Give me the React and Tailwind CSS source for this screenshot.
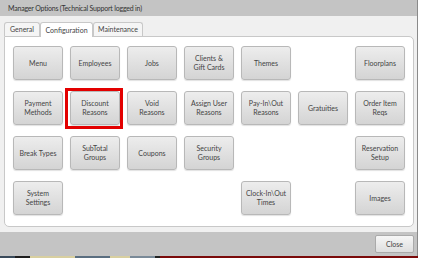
import React from 'react';

const rows = [
  ['Menu', 'Employees', 'Jobs', 'Clients &\nGift Cards', 'Themes', null, 'Floorplans'],
  ['Payment\nMethods', 'Discount\nReasons', 'Void\nReasons', 'Assign User\nReasons', 'Pay-In\\Out\nReasons', 'Gratuities', 'Order Item\nReqs'],
  ['Break Types', 'SubTotal\nGroups', 'Coupons', 'Security\nGroups', null, null, 'Reservation\nSetup'],
  ['System\nSettings', null, null, null, 'Clock-In\\Out\nTimes', null, 'Images'],
];

const OptionButton = ({ label, highlighted }) => (
  <div className="relative">
    <button className="w-[50px] h-[34px] rounded-[3px] border border-[#b8b8b8] bg-gradient-to-b from-[#ededed] to-[#d4d4d4] text-[7px] leading-[9px] text-[#444] whitespace-pre-line shadow-[0_1px_1px_rgba(0,0,0,0.12)]">
      {label}
    </button>
    {highlighted && (
      <div className="absolute -left-[5px] -top-[3px] w-[58px] h-[41px] border-[3px] border-[#e30000]"></div>
    )}
  </div>
);

const App = () => {
  return (
    <div className="w-[428px] h-[262px] bg-white relative" style={{ fontFamily: 'Lato, "Noto Sans", sans-serif' }}>
      <div className="w-[418px] h-[256px] flex flex-col border-r border-[#8a8a8a]">
        <div className="h-[16px] bg-[#c4c4c4] text-[7px] tracking-[-0.2px] leading-[16px] text-[#333] pl-[8px]">
          Manager Options (Technical Support logged in)
        </div>

        <div className="flex-1 bg-[#f0f0f0] flex flex-col px-[4px] pt-[6px]">
          <div className="flex items-end h-[14px] text-[7px] text-[#444]">
            <div className="h-[14px] w-[36px] flex items-center justify-center border border-b-0 border-[#c8c8c8] rounded-t-[3px] bg-[#f5f5f5]">General</div>
            <div className="h-[15px] w-[53px] flex items-center justify-center border border-b-0 border-[#c8c8c8] rounded-t-[3px] bg-white relative top-[1px] z-10">Configuration</div>
            <div className="h-[14px] w-[50px] flex items-center justify-center border border-b-0 border-[#c8c8c8] rounded-t-[3px] bg-[#f5f5f5]">Maintenance</div>
          </div>
          <div className="w-[410px] h-[191px] bg-white border border-[#c8c8c8] rounded-b-[5px] rounded-tr-[5px] pl-[8px] pt-[9px] flex flex-col gap-[11px]">
            {rows.map((row, r) => (
              <div key={r} className="flex gap-[7px]">
                {row.map((label, c) =>
                  label ? (
                    <OptionButton key={c} label={label} highlighted={r === 1 && c === 1} />
                  ) : (
                    <div key={c} className="w-[50px] h-[34px]"></div>
                  )
                )}
              </div>
            ))}
          </div>
          <div className="h-[5px]"></div>
        </div>

        <div className="h-[24px] bg-[#c4c4c4] flex items-center justify-end pr-[3px]">
          <button className="w-[39px] h-[18px] rounded-[2px] border border-[#aaa] bg-gradient-to-b from-[#f6f6f6] to-[#dedede] text-[7px] text-[#444]">
            Close
          </button>
        </div>
      </div>

      <div className="flex h-[2px] w-[418px]">
        <div className="w-[15px] bg-[#3a4a5a]"></div>
        <div className="w-[15px] bg-[#1e1e1e]"></div>
        <div className="w-[45px] bg-[#d8cfa0]"></div>
        <div className="w-[35px] bg-[#5a6e80]"></div>
        <div className="w-[20px] bg-[#d8cfa0]"></div>
        <div className="w-[25px] bg-[#7a8a98]"></div>
        <div className="w-[5px] bg-[#222]"></div>
        <div className="flex-1 bg-[#7a0a0a]"></div>
      </div>
    </div>
  );
};

export default App;
